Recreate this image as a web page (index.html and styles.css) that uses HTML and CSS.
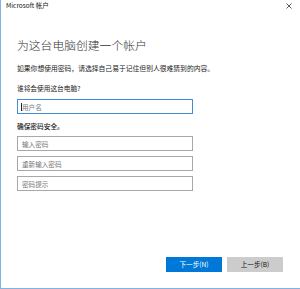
FILE: index.html
```html
<!DOCTYPE html>
<html lang="zh-CN">
<head>
  <meta charset="UTF-8" />
  <title>Microsoft 帐户</title>
  <link rel="stylesheet" href="styles.css">
</head>
<body>
  <div class="window">
    <div class="titlebar">
      <span class="title">Microsoft 帐户</span>
      <svg class="close" width="6" height="6" viewBox="0 0 6 6">
        <path d="M0.5 0.5 L5.5 5.5 M5.5 0.5 L0.5 5.5" stroke="#333" stroke-width="0.8" fill="none" />
      </svg>
    </div>

    <div class="content">
      <h1>为这台电脑创建一个帐户</h1>
      <p class="desc">如果你想使用密码，请选择自己易于记住但别人很难猜到的内容。</p>

      <p class="label">谁将会使用这台电脑?</p>
      <div class="field focused"><span class="caret"></span><span class="hint">用户名</span></div>

      <p class="label second">确保密码安全。</p>
      <div class="fields">
        <div class="field"><span class="hint">输入密码</span></div>
        <div class="field"><span class="hint">重新输入密码</span></div>
        <div class="field"><span class="hint">密码提示</span></div>
      </div>

      <div class="actions">
        <button class="btn primary">下一步(N)</button>
        <button class="btn">上一步(B)</button>
      </div>
    </div>
  </div>
</body>
</html>
```

FILE: styles.css
```css
* {
  box-sizing: border-box;
}

body {
  margin: 0;
  font-family: "Noto Sans CJK SC", "Noto Sans", sans-serif;
  background: #fff;
  color: #222;
}

.window {
  width: 300px;
  height: 289px;
  border-left: 1px solid #7fb2e5;
  border-bottom: 1px solid #7fb2e5;
  display: flex;
  flex-direction: column;
}

.titlebar {
  height: 11px;
  display: flex;
  align-items: center;
  justify-content: space-between;
  padding: 0 8px 0 5px;
}

.title {
  font-size: 6.5px;
  line-height: 11px;
  color: #111;
}

.close {
  display: block;
}

.content {
  flex: 1;
  display: flex;
  flex-direction: column;
  padding: 0 17px 16px 16px;
}

h1 {
  margin: 27px 0 0;
  font-size: 11.8px;
  line-height: 14px;
  font-weight: 300;
  color: #333;
}

.desc {
  margin: 11px 0 0;
  font-size: 6.8px;
  line-height: 10px;
}

.label {
  margin: 10px 0 0;
  font-size: 6.7px;
  line-height: 10px;
  color: #1a1a1a;
}

.label.second {
  margin-top: 7px;
  font-weight: 500;
}

.field {
  width: 176px;
  height: 15px;
  border: 1px solid #a8a8a8;
  display: flex;
  align-items: center;
  padding-left: 4px;
  margin-top: 6px;
}

.field.focused {
  border-color: #3f8fd8;
}

.fields {
  display: flex;
  flex-direction: column;
  gap: 5px;
  margin-top: 5px;
}

.fields .field {
  margin-top: 0;
}

.caret {
  width: 1px;
  height: 8px;
  background: #222;
  margin-left: -1px;
}

.hint {
  font-size: 6.6px;
  line-height: 10px;
  color: #777;
}

.actions {
  margin-top: auto;
  display: flex;
  justify-content: flex-end;
  gap: 5px;
}

.btn {
  width: 56px;
  height: 15px;
  border: none;
  padding: 0;
  font-family: inherit;
  font-size: 6.6px;
  line-height: 15px;
  background: #cccccc;
  color: #111;
}

.btn.primary {
  background: #0078d7;
  color: #fff;
}
```
